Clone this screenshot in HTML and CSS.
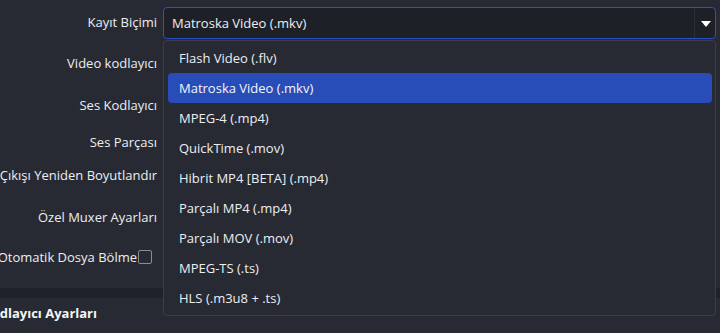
FILE: index.html
```html
<!DOCTYPE html>
<html lang="tr">
<head>
<meta charset="utf-8">
<title>Kayıt Ayarları</title>
<link rel="stylesheet" href="styles.css">
</head>
<body>
<div class="page">
  <div class="form">
    <div class="label r1">Kayıt Biçimi</div>
    <div class="field r1">
      <div class="combo">
        <span class="combo-text">Matroska Video (.mkv)</span>
        <span class="combo-btn"><svg width="10" height="6" viewBox="0 0 10 6"><path d="M0 0H10L5 6Z" fill="#ffffff"/></svg></span>
      </div>
    </div>
    <div class="label r2">Video kodlayıcı</div><div class="field r2"></div>
    <div class="label r3">Ses Kodlayıcı</div><div class="field r3"></div>
    <div class="label r4">Ses Parçası</div><div class="field r4"></div>
    <div class="label r5">Çıkışı Yeniden Boyutlandır</div><div class="field r5"></div>
    <div class="label r6">Özel Muxer Ayarları</div><div class="field r6"></div>
    <div class="label r7">Otomatik Dosya Bölme<span class="check"></span></div><div class="field r7"></div>
  </div>
  <div class="band"></div>
  <div class="section-title"><span>Kodlayıcı Ayarları</span></div>

  <ul class="popup">
    <li class="item">Flash Video (.flv)</li>
    <li class="item selected">Matroska Video (.mkv)</li>
    <li class="item">MPEG-4 (.mp4)</li>
    <li class="item">QuickTime (.mov)</li>
    <li class="item">Hibrit MP4 [BETA] (.mp4)</li>
    <li class="item">Parçalı MP4 (.mp4)</li>
    <li class="item">Parçalı MOV (.mov)</li>
    <li class="item">MPEG-TS (.ts)</li>
    <li class="item">HLS (.m3u8 + .ts)</li>
  </ul>
</div>
</body>
</html>
```

FILE: styles.css
```css
* { box-sizing: border-box; }
html, body {
  margin: 0;
  padding: 0;
  background: #272a33;
  overflow: hidden;
}
body {
  font-family: "Open Sans", "Noto Sans", sans-serif;
  font-size: 13px;
  color: #eceef2;
  width: 720px;
  height: 333px;
}
.page {
  position: relative;
  width: 720px;
  height: 333px;
  overflow: hidden;
}
.form {
  display: grid;
  grid-template-columns: 157px 1fr;
  column-gap: 6px;
  padding-top: 7px;
  padding-right: 4px;
}
.label {
  display: flex;
  justify-content: flex-end;
  align-items: center;
  white-space: nowrap;
  min-width: 0;
}
.field { min-width: 0; }
.r1 { height: 32px; }
.r2 { height: 48px; }
.r3 { height: 36px; }
.r4 { height: 38px; }
.r5 { height: 28px; }
.r6 { height: 56px; }
.r7 { height: 24px; }

.label.r1 { padding-bottom: 2px; }

.check {
  display: inline-block;
  width: 14px;
  height: 14px;
  border: 1px solid #8b8d95;
  border-radius: 2px;
  margin-left: 1px;
  margin-right: 5px;
  flex: none;
}

.combo {
  display: flex;
  height: 32px;
  background: #1e2028;
  border: 1px solid #2a50c4;
  border-radius: 4px;
}
.combo-text {
  flex: 1;
  display: flex;
  align-items: center;
  padding-left: 8px;
  color: #eceef2;
}
.combo-btn {
  width: 21px;
  display: flex;
  align-items: center;
  justify-content: center;
  border-left: 1px solid #2c2f38;
  padding-top: 2px;
  padding-left: 1px;
}

.band {
  margin-top: 19px;
  height: 10px;
  background: #1f2129;
}
.section-title {
  display: flex;
  justify-content: flex-end;
  width: 97px;
  height: 30px;
  align-items: center;
  white-space: nowrap;
  font-weight: 700;
  color: #f4f5f7;
}

.popup {
  position: absolute;
  left: 163px;
  top: 40px;
  width: 553px;
  height: 276px;
  margin: 0;
  padding: 2px 3px 2px 4px;
  list-style: none;
  background: #272a33;
  border: 1px solid #3b3e4a;
  border-radius: 4px;
}
.item {
  height: 30px;
  display: flex;
  align-items: center;
  padding-left: 11px;
  color: #eceef2;
  border-radius: 4px;
}
.item.selected {
  background: #284cb8;
  color: #f4f6fa;
}
```
